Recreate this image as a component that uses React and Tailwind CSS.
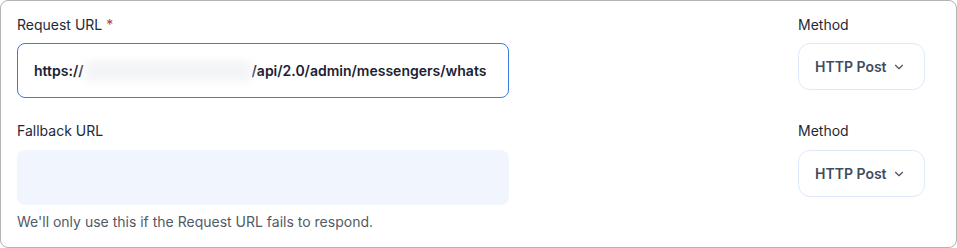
import { ChevronDown } from 'lucide-react'

function MethodSelect() {
  return (
    <div>
      <div className="text-[14px] leading-5 text-[#1f2937] mb-2">Method</div>
      <button className="w-[127px] h-[47px] rounded-[12px] border border-[#dfe9fb] bg-white flex items-center pl-4 pr-[18px] justify-between">
        <span className="text-[14px] font-semibold text-[#3f4b5e]">HTTP Post</span>
        <ChevronDown className="w-[14px] h-[14px] text-[#4b5563]" strokeWidth={2} />
      </button>
    </div>
  )
}

export default function App() {
  return (
    <div className="w-[957px] h-[248px] bg-white" style={{ fontFamily: 'Inter, "Noto Sans", sans-serif' }}>
      <div className="w-[957px] h-[248px] border border-[#b4b4b4] rounded-[8px] pl-4 pr-[15px] pt-[14px]">
        {/* Request URL row */}
        <div className="flex justify-between pr-[16px]">
          <div>
            <div className="text-[14px] leading-5 text-[#1f2937] mb-2">
              Request URL <span className="text-[#c0392b]">*</span>
            </div>
            <div className="w-[492px] h-[55px] rounded-[8px] border border-[#3b7ddd] flex items-center px-4">
              <span className="text-[14px] font-semibold text-[#1a2233]">https://</span>
              <span className="inline-block w-[166px] h-[20px] bg-gray-100 blur-[5px] mx-[1px]" />
              <span className="text-[14px] font-semibold text-[#1a2233] whitespace-nowrap overflow-hidden">/api/2.0/admin/messengers/whats</span>
            </div>
          </div>
          <MethodSelect />
        </div>

        {/* Fallback URL row */}
        <div className="flex justify-between pr-[16px] mt-[23px]">
          <div>
            <div className="text-[14px] leading-5 text-[#1f2937] mb-[9px]">Fallback URL</div>
            <div className="w-[492px] h-[55px] rounded-[8px] bg-[#f0f5fe]" />
            <p className="text-[14px] leading-5 text-[#525a66] mt-[7px]">We'll only use this if the Request URL fails to respond.</p>
          </div>
          <div>
            <div className="text-[14px] leading-5 text-[#1f2937] mb-[9px]">Method</div>
            <button className="w-[127px] h-[47px] rounded-[12px] border border-[#dfe9fb] bg-white flex items-center pl-4 pr-[18px] justify-between">
              <span className="text-[14px] font-semibold text-[#3f4b5e]">HTTP Post</span>
              <ChevronDown className="w-[14px] h-[14px] text-[#4b5563]" strokeWidth={2} />
            </button>
          </div>
        </div>
      </div>
    </div>
  )
}
